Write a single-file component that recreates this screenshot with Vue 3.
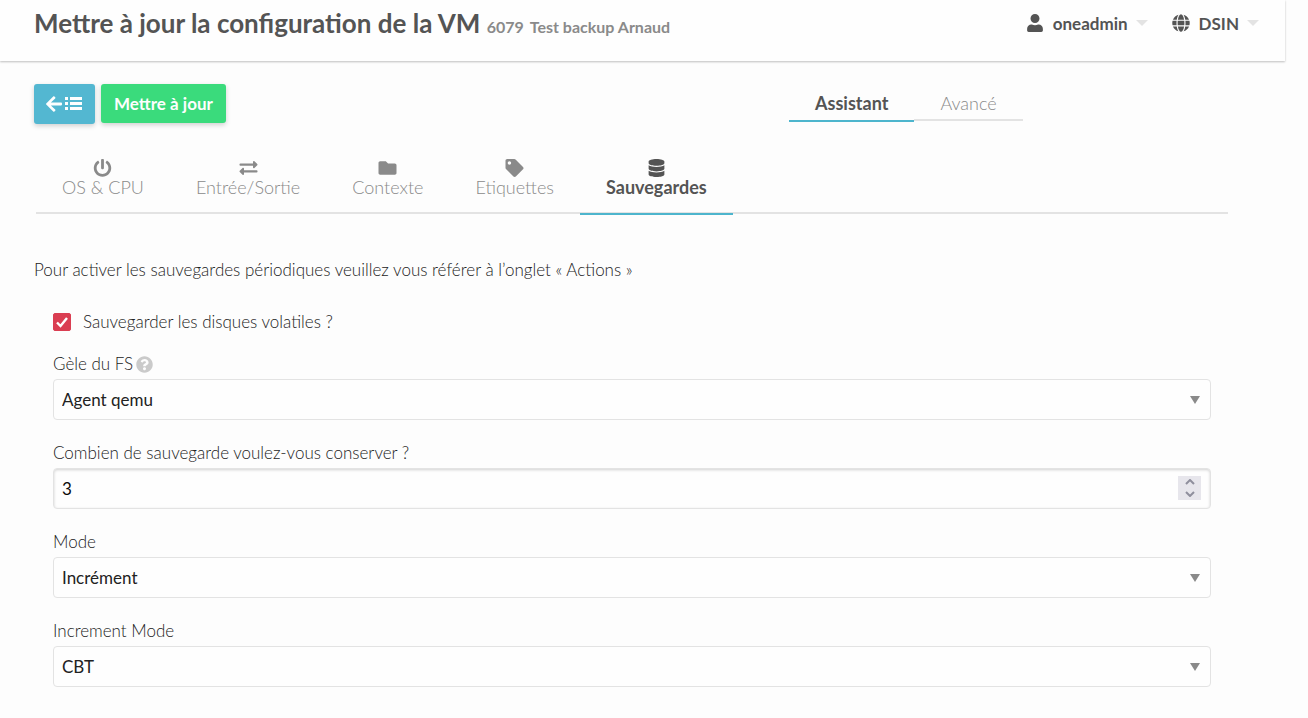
<script setup>
import { ref } from 'vue'

const POWER = 'M400 54.1c63 45 104 118.6 104 201.9 0 136.8-110.8 247.7-247.5 248C120 504.3 8.2 393 8 256.4 7.9 173.1 48.9 99.3 111.8 54.2c11.7-8.3 28-4.8 35 7.7L162.6 90c5.9 10.5 3.1 23.8-6.6 31-41.5 30.8-68 79.6-68 134.9-.1 92.3 74.5 168.1 168 168.1 91.6 0 168.6-74.2 168-169.1-.3-51.8-24.7-101.8-68.1-134-9.7-7.2-12.4-20.5-6.5-30.9l15.8-28.1c7-12.4 23.2-16.1 34.8-7.8zM296 264V24c0-13.3-10.7-24-24-24h-32c-13.3 0-24 10.7-24 24v240c0 13.3 10.7 24 24 24h32c13.3 0 24-10.7 24-24z'
const EXCHANGE = 'M0 168v-16c0-13.255 10.745-24 24-24h360V80c0-21.367 25.899-32.042 40.971-16.971l80 80c9.372 9.373 9.372 24.569 0 33.941l-80 80C409.956 271.982 384 261.456 384 240v-48H24c-13.255 0-24-10.745-24-24zm488 152H128v-48c0-21.314-25.862-32.08-40.971-16.971l-80 80c-9.372 9.373-9.372 24.569 0 33.941l80 80C102.057 463.997 128 453.437 128 432v-48h360c13.255 0 24-10.745 24-24v-16c0-13.255-10.745-24-24-24z'
const FOLDER = 'M464 128H272l-64-64H48C21.49 64 0 85.49 0 112v288c0 26.51 21.49 48 48 48h416c26.51 0 48-21.49 48-48V176c0-26.51-21.49-48-48-48z'
const TAG = 'M0 252.118V48C0 21.49 21.49 0 48 0h204.118a48 48 0 0 1 33.941 14.059l211.882 211.882c18.745 18.745 18.745 49.137 0 67.882L293.823 497.941c-18.745 18.745-49.137 18.745-67.882 0L14.059 286.059A48 48 0 0 1 0 252.118zM112 64c-26.51 0-48 21.49-48 48s21.49 48 48 48 48-21.49 48-48-21.49-48-48-48z'
const DATABASE = 'M448 73.143v45.714C448 159.143 347.667 192 224 192S0 159.143 0 118.857V73.143C0 32.857 100.333 0 224 0s224 32.857 224 73.143zM448 176v102.857C448 319.143 347.667 352 224 352S0 319.143 0 278.857V176c48.125 33.143 136.208 48.572 224 48.572S399.874 209.143 448 176zm0 160v102.857C448 479.143 347.667 512 224 512S0 479.143 0 438.857V336c48.125 33.143 136.208 48.572 224 48.572S399.874 369.143 448 336z'

const modes = ['Assistant', 'Avancé']
const activeMode = ref('Assistant')

const tabs = [
  { label: 'OS & CPU', icon: POWER, box: '0 0 512 512' },
  { label: 'Entrée/Sortie', icon: EXCHANGE, box: '0 0 512 512' },
  { label: 'Contexte', icon: FOLDER, box: '0 0 512 512' },
  { label: 'Etiquettes', icon: TAG, box: '0 0 512 512' },
  { label: 'Sauvegardes', icon: DATABASE, box: '-32 0 512 512' },
]
const activeTab = ref('Sauvegardes')

const volatile = ref(true)
const freeze = ref('Agent qemu')
const keep = ref(3)
const mode = ref('Incrément')
const increment = ref('CBT')
</script>

<template>
  <div class="page">
    <header class="header">
      <h1 class="title">
        Mettre à jour la configuration de la VM
        <small><span>6079</span><span>Test backup Arnaud</span></small>
      </h1>
      <nav class="menus">
        <button type="button" class="menu">
          <svg class="menu-icon" viewBox="-32 0 512 512"><path d="M224 256c70 0 128-58 128-128S294 0 224 0 96 58 96 128s58 128 128 128zM120 296C54 296 0 350 0 418v52c0 23 19 42 42 42h364c23 0 42-19 42-42v-52c0-68-54-122-120-122h-16c-26 14-56 22-88 22s-62-8-88-22z" /></svg>
          <span>oneadmin</span>
          <svg class="caret" viewBox="0 0 12 6"><path d="M0 0h12L6 6z" /></svg>
        </button>
        <button type="button" class="menu">
          <svg class="menu-icon" viewBox="-8 0 512 512"><path d="M336.5 160C322 70.7 287.8 8 248 8s-74 62.7-88.5 152h177zM152 256c0 22.2 1.2 43.5 3.3 64h185.3c2.1-20.5 3.3-41.8 3.3-64s-1.2-43.5-3.3-64H155.3c-2.1 20.5-3.3 41.8-3.3 64zm324.7-96c-28.6-67.9-86.5-120.4-158-141.6 24.4 33.8 41.2 84.7 50 141.6h108zM177.2 18.4C105.8 39.6 47.8 92.1 19.3 160h108c8.7-56.9 25.5-107.8 49.9-141.6zM487.4 192H372.7c2.1 21 3.3 42.5 3.3 64s-1.2 43-3.3 64h114.6c5.5-20.5 8.6-41.8 8.6-64s-3.1-43.5-8.5-64zM120 256c0-21.5 1.2-43 3.3-64H8.6C3.2 212.5 0 233.8 0 256s3.2 43.5 8.6 64h114.6c-2-21-3.2-42.5-3.2-64zm39.5 96c14.5 89.3 48.7 152 88.5 152s74-62.7 88.5-152h-177zm159.3 141.6c71.4-21.2 129.4-73.7 158-141.6h-108c-8.8 56.9-25.6 107.8-50 141.6zM19.3 352c28.6 67.9 86.5 120.4 158 141.6-24.4-33.8-41.2-84.7-50-141.6h-108z" /></svg>
          <span>DSIN</span>
          <svg class="caret" viewBox="0 0 12 6"><path d="M0 0h12L6 6z" /></svg>
        </button>
      </nav>
    </header>

    <main class="content">
      <div class="toolbar">
        <div class="actions">
          <button type="button" class="btn btn-back" aria-label="Retour à la liste">
            <svg class="arrow" viewBox="0 32 448 448"><path d="M257.5 445.1l-22.2 22.2c-9.4 9.4-24.6 9.4-33.9 0L7 273c-9.4-9.4-9.4-24.6 0-33.9L201.4 44.7c9.4-9.4 24.6-9.4 33.9 0l22.2 22.2c9.5 9.5 9.3 25-.4 34.3L136.6 216H424c13.3 0 24 10.7 24 24v32c0 13.3-10.7 24-24 24H136.6l120.5 114.8c9.8 9.3 10 24.8.4 34.3z" /></svg>
            <svg class="list" viewBox="0 0 18 16"><path d="M0 1h3v3H0zM0 6h3v3H0zM0 11h3v3H0zM5 1h12v3H5zM5 6h12v3H5zM5 11h12v3H5z" /></svg>
          </button>
          <button type="button" class="btn btn-update">Mettre à jour</button>
        </div>
        <div class="tabs modes" role="tablist">
          <button
            v-for="m in modes"
            :key="m"
            type="button"
            role="tab"
            class="tab"
            :class="{ active: m === activeMode }"
            :aria-selected="m === activeMode"
            @click="activeMode = m"
          >{{ m }}</button>
        </div>
      </div>

      <div class="tabs sections" role="tablist">
        <button
          v-for="t in tabs"
          :key="t.label"
          type="button"
          role="tab"
          class="tab"
          :class="{ active: t.label === activeTab }"
          :aria-selected="t.label === activeTab"
          @click="activeTab = t.label"
        >
          <svg class="tab-icon" :viewBox="t.box"><path :d="t.icon" /></svg>
          <span>{{ t.label }}</span>
        </button>
      </div>

      <p class="hint">Pour activer les sauvegardes périodiques veuillez vous référer à l’onglet « Actions »</p>

      <form class="form" @submit.prevent>
        <div class="check">
          <span class="check-box">
            <input id="volatile" v-model="volatile" type="checkbox" />
            <svg v-if="volatile" viewBox="0 0 18 18"><path d="M4 9.500l3.500 3.500L14 5" /></svg>
          </span>
          <label for="volatile">Sauvegarder les disques volatiles ?</label>
        </div>

        <div class="field">
          <label for="freeze">
            Gèle du FS
            <svg class="help" viewBox="0 0 512 512"><path d="M504 256c0 136.997-111.043 248-248 248S8 392.997 8 256C8 119.083 119.043 8 256 8s248 111.083 248 248zM262.655 90c-54.497 0-89.255 22.957-116.549 63.758-3.536 5.286-2.353 12.415 2.715 16.258l34.699 26.31c5.205 3.947 12.621 3.008 16.665-2.122 17.864-22.658 30.113-35.797 57.303-35.797 20.429 0 45.698 13.148 45.698 32.958 0 14.976-12.363 22.667-32.534 33.976C247.128 238.528 216 254.941 216 296v4c0 6.627 5.373 12 12 12h56c6.627 0 12-5.373 12-12v-1.333c0-28.462 83.186-29.647 83.186-106.667 0-58.002-60.165-102-116.531-102zM256 338c-25.365 0-46 20.635-46 46 0 25.364 20.635 46 46 46s46-20.636 46-46c0-25.365-20.635-46-46-46z" /></svg>
          </label>
          <div class="control">
            <select id="freeze" v-model="freeze"><option>Agent qemu</option></select>
            <svg class="select-arrow" viewBox="0 0 10 8"><path d="M0 0h10L5 8z" /></svg>
          </div>
        </div>

        <div class="field">
          <label for="keep">Combien de sauvegarde voulez-vous conserver ?</label>
          <div class="control">
            <input id="keep" v-model="keep" type="number" min="1" />
            <div class="spinner">
              <button type="button" aria-label="Augmenter" @click="keep++"><svg viewBox="0 0 10 6"><path d="M1 5l4-4 4 4" /></svg></button>
              <button type="button" aria-label="Diminuer" @click="keep--"><svg viewBox="0 0 10 6"><path d="M1 1l4 4 4-4" /></svg></button>
            </div>
          </div>
        </div>

        <div class="field">
          <label for="mode">Mode</label>
          <div class="control">
            <select id="mode" v-model="mode"><option>Incrément</option></select>
            <svg class="select-arrow" viewBox="0 0 10 8"><path d="M0 0h10L5 8z" /></svg>
          </div>
        </div>

        <div class="field">
          <label for="increment">Increment Mode</label>
          <div class="control">
            <select id="increment" v-model="increment"><option>CBT</option></select>
            <svg class="select-arrow" viewBox="0 0 10 8"><path d="M0 0h10L5 8z" /></svg>
          </div>
        </div>
      </form>
    </main>
  </div>
</template>

<style>
body {
  background: #fdfdfd;
}
</style>

<style scoped>
.page {
  font-family: Lato, "Liberation Sans", sans-serif;
  font-size: 17px;
  font-weight: 300;
  color: #222;
}
button,
input,
select {
  font: inherit;
  color: inherit;
  margin: 0;
  padding: 0;
  border: 0;
  background: none;
  box-sizing: border-box;
}
button {
  cursor: pointer;
}
svg {
  display: block;
  fill: currentColor;
  flex: none;
}
.header {
  display: flex;
  justify-content: space-between;
  align-items: flex-start;
  height: 61px;
  box-sizing: border-box;
  margin-right: 23px;
  padding: 7px 26px 0 34px;
  background: #fefefe;
  box-shadow: 0 1px 2px rgba(0, 0, 0, 0.25);
  color: #545454;
}
.title {
  margin: 0;
  font-size: 26px;
  line-height: 32px;
  font-weight: 700;
}
.title small {
  font-size: 16px;
  color: #8a8a8a;
}
.title small span + span {
  margin-left: 6px;
}
.menus {
  display: flex;
  gap: 24px;
}
.menu {
  display: flex;
  align-items: center;
  height: 32px;
  font-size: 17px;
  font-weight: 700;
}
.menu-icon {
  width: 18px;
  height: 18px;
  margin-right: 9px;
}
.caret {
  width: 12px;
  height: 6px;
  margin-left: 8px;
  color: #e3e3e3;
}
.content {
  padding: 23px 80px 32px 34px;
}
.toolbar {
  display: grid;
  grid-template-columns: 755fr 439fr;
  align-items: start;
}
.actions {
  display: flex;
  align-items: flex-start;
  gap: 6px;
}
.btn {
  display: flex;
  align-items: center;
  justify-content: center;
  height: 39px;
  padding: 0 13px;
  border-radius: 3px;
  color: #fefefe;
  font-weight: 700;
  font-size: 17px;
  box-shadow: 0 2px 5px rgba(0, 0, 0, 0.18);
}
.btn-back {
  height: 40px;
  gap: 3px;
  padding: 0 12px;
  background: #53b7d1;
}
.btn-update {
  background: #3adb7c;
}
.arrow {
  width: 16px;
  height: 16px;
}
.list {
  width: 18px;
  height: 16px;
}
.tabs {
  display: flex;
  align-items: flex-start;
}
.tab {
  padding: 0 26px;
  font-size: 18px;
  line-height: 20px;
  color: #8a8a8a;
}
.tab.active {
  color: #545454;
  font-weight: 700;
  border-bottom: 2px solid #4db5cd;
}
.modes .tab {
  height: 37px;
  padding-top: 8px;
  padding-bottom: 6px;
  border-bottom: 2px solid #e3e3e3;
}
.modes .tab.active {
  height: 38px;
  border-bottom-color: #4db5cd;
}
.sections {
  height: 58px;
  margin: 30px 0 0 2px;
  border-bottom: 2px solid #e3e3e3;
}
.sections .tab {
  display: flex;
  flex-direction: column;
  align-items: center;
  height: 61px;
  padding-top: 5px;
}
.tab-icon {
  width: 19px;
  height: 18px;
}
.hint {
  margin: 45px 0 0;
  line-height: 22px;
}
.form {
  display: flex;
  flex-direction: column;
  gap: 18px;
  margin: 31px 17px 0 19px;
}
.check {
  display: flex;
  align-items: center;
  gap: 12px;
  height: 19px;
}
.check-box {
  position: relative;
  width: 18px;
  height: 18px;
}
.check-box input {
  appearance: none;
  display: block;
  width: 18px;
  height: 18px;
  border: 1px solid #8f8f9d;
  border-radius: 2px;
}
.check-box input:checked {
  border-color: #da3e52;
  background: #da3e52;
}
.check-box svg {
  position: absolute;
  inset: 0;
  fill: none;
  stroke: #fff;
  stroke-width: 2.4;
  pointer-events: none;
}
.field label {
  display: flex;
  align-items: center;
  gap: 3px;
  line-height: 30px;
}
.help {
  width: 17px;
  height: 17px;
  color: #cacaca;
}
.control {
  position: relative;
}
.control select,
.control input {
  appearance: none;
  display: block;
  width: 100%;
  height: 41px;
  padding: 0 8px;
  border: 1px solid #e3e3e3;
  border-radius: 4px;
  background: #fefefe;
  font-weight: 400;
}
.control input {
  appearance: textfield;
  color: #0a0a0a;
  box-shadow: inset 0 1px 3px rgba(0, 0, 0, 0.18);
}
.control input::-webkit-inner-spin-button {
  display: none;
}
.select-arrow {
  position: absolute;
  right: 11px;
  top: 17px;
  width: 10px;
  height: 8px;
  color: #8a8a8a;
  pointer-events: none;
}
.spinner {
  position: absolute;
  right: 10px;
  top: 8px;
  width: 23px;
  height: 24px;
  display: flex;
  flex-direction: column;
  background: #e7e6ec;
}
.spinner button {
  flex: 1;
  display: flex;
  align-items: center;
  justify-content: center;
}
.spinner svg {
  width: 10px;
  height: 6px;
  fill: none;
  stroke: #8f8f9d;
  stroke-width: 2;
}
</style>
